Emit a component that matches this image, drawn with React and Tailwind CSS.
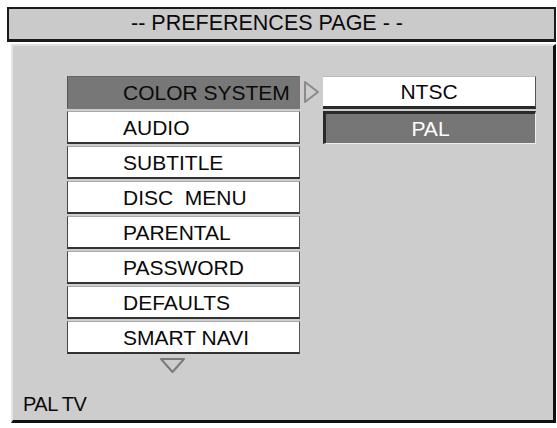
import React from "react";

const items = [
  "COLOR SYSTEM",
  "AUDIO",
  "SUBTITLE",
  "DISC  MENU",
  "PARENTAL",
  "PASSWORD",
  "DEFAULTS",
  "SMART NAVI",
];

function MenuItem({ label, active }) {
  return (
    <div
      className={
        "h-[33px] flex items-center pl-[55px] border-l border-r border-t border-b-2 whitespace-pre " +
        (active
          ? "bg-[#777777] border-l-[#555] border-r-[#777] border-t-[#666] border-b-[#777]"
          : "bg-white border-l-[#444] border-r-[#555] border-t-[#aaa] border-b-[#333]")
      }
    >
      {label}
    </div>
  );
}

export default function App() {
  return (
    <div
      className="w-[557px] h-[428px] bg-white pt-[7px] pl-[7px] pr-[1px] text-[#0a0a0a] flex flex-col"
      style={{ fontFamily: '"Liberation Sans", Arial, sans-serif' }}
    >
      {/* title bar */}
      <div className="h-[35px] border-2 border-[#1a1a1a] border-b-[3px] bg-[#cacaca] flex items-center pl-[122px] text-[21.5px] leading-none">
        -- PREFERENCES PAGE - -
      </div>

      {/* panel */}
      <div className="mt-[2px] ml-[4px] h-[379px] bg-[#cdcdcd] border-l-2 border-t-2 border-l-[#e4e4e4] border-t-[#e0e0e0] border-r-[3px] border-b-[3px] border-r-[#111] border-b-[#111] flex flex-col">
        <div className="flex pt-[30px] pl-[54px] text-[21px] leading-none">
          <div className="w-[233px] flex flex-col gap-[2px]">
            {items.map((label, i) => (
              <MenuItem key={label} label={label} active={i === 0} />
            ))}
            <div className="flex pl-[92px] pt-[1px]">
              <svg width="27" height="17" viewBox="0 0 27 17">
                <path d="M2 2 L25 2 L13.5 15 Z" fill="none" stroke="#7a7a7a" strokeWidth="2" strokeLinejoin="round" />
              </svg>
            </div>
          </div>

          <div className="w-[23px] flex justify-center pt-[4px]">
            <svg width="19" height="24" viewBox="0 0 19 24">
              <path d="M3 2 L16 12 L3 22 Z" fill="none" stroke="#8a8a8a" strokeWidth="2" strokeLinejoin="round" />
            </svg>
          </div>

          <div className="w-[213px] flex flex-col gap-[2px]">
            <div className="h-[33px] bg-white border-r border-r-[#555] border-t border-t-[#bbb] border-b-[3px] border-b-[#2a2a2a] flex items-center justify-center">
              NTSC
            </div>
            <div className="h-[33px] bg-[#767676] border-t-[3px] border-t-[#2a2a2a] border-l-[3px] border-l-[#2a2a2a] border-b border-b-[#eee] border-r border-r-[#eee] flex items-center justify-center text-white">
              PAL
            </div>
          </div>
        </div>

        <div className="mt-auto pb-[6px] pl-[10px] text-[20px] leading-none tracking-[-0.5px]">
          PAL TV
        </div>
      </div>
    </div>
  );
}
